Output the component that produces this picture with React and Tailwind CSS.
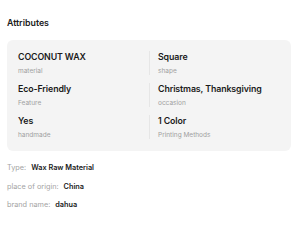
import React from 'react';

const attrs = [
  { value: 'COCONUT WAX', label: 'material' },
  { value: 'Square', label: 'shape' },
  { value: 'Eco-Friendly', label: 'Feature' },
  { value: 'Christmas, Thanksgiving', label: 'occasion' },
  { value: 'Yes', label: 'handmade' },
  { value: '1 Color', label: 'Printing Methods' },
];

const extras = [
  { label: 'Type:', value: 'Wax Raw Material' },
  { label: 'place of origin:', value: 'China' },
  { label: 'brand name:', value: 'dahua' },
];

export default function App() {
  return (
    <div className="w-[300px] h-[250px] bg-white px-[7px] pt-[17px] text-[#1a1a1a]" style={{ fontFamily: 'Inter, "Noto Sans", sans-serif' }}>
      <h2 className="text-[8.8px] font-semibold leading-[12px]">Attributes</h2>

      <div className="mt-[11px] w-[284px] rounded-[6px] bg-[#f4f4f4] px-[11px] pt-[11px] pb-[12px] grid grid-cols-2 gap-y-[8px]">
        {attrs.map((a, i) => (
          <div key={i} className={i % 2 === 1 ? 'border-l border-[#e6e6e6] pl-[8px]' : ''}>
            <div className="text-[8.8px] font-semibold leading-[12px] tracking-[-0.1px]">{a.value}</div>
            <div className="mt-[4px] text-[6.5px] leading-[8px] text-[#a0a0a0]">{a.label}</div>
          </div>
        ))}
      </div>

      <div className="mt-[11px] flex flex-col gap-[7.5px]">
        {extras.map((e, i) => (
          <div key={i} className="flex items-center gap-[5px] text-[7.3px] leading-[11px]">
            <span className="text-[#a3a3a3]">{e.label}</span>
            <span className="font-semibold text-[#1a1a1a]">{e.value}</span>
          </div>
        ))}
      </div>
    </div>
  );
}
